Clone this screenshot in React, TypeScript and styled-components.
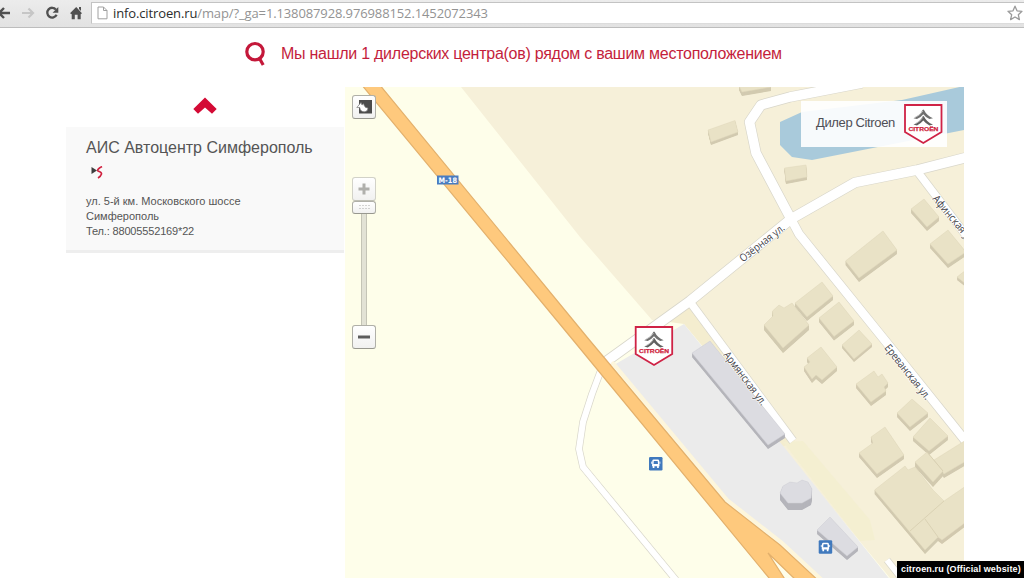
import React from "react";
import styled, { createGlobalStyle } from "styled-components";

const GlobalStyle = createGlobalStyle`
  * { box-sizing: border-box; }
  html, body { margin: 0; padding: 0; background: #fff; overflow: hidden; }
  body { font-family: "Liberation Sans", Arial, sans-serif; }
  svg { display: block; flex: none; }
`;

const Page = styled.div`
  position: relative;
  width: 1024px;
  height: 578px;
  overflow: hidden;
  background: #fff;
`;

const Toolbar = styled.div`
  display: flex;
  height: 28px;
  background: linear-gradient(#ececec, #e2e2e2);
  border-bottom: 1px solid #bdbdbd;
`;

const NavButtons = styled.div`
  width: 91px;
  height: 27px;
`;

const AddressField = styled.div`
  flex: 1;
  display: flex;
  align-items: center;
  height: 22px;
  margin-top: 2px;
  padding: 0 1px 0 5px;
  background: #fff;
  border: 1px solid #c3c3c3;
  border-right: none;
  border-bottom-color: #dcdcdc;
`;

const Url = styled.div`
  flex: 1;
  margin-left: 5px;
  font: 13px/20px "Open Sans", "Noto Sans", sans-serif;
  letter-spacing: -0.12px;
  color: #939393;
  white-space: nowrap;
`;

const Host = styled.span`
  color: #2c2c2c;
`;

const SearchResult = styled.header`
  display: flex;
  align-items: center;
  height: 59px;
  padding: 0 0 7px 245px;
`;

const Title = styled.h1`
  margin: 0 0 0 14px;
  font-size: 16px;
  font-weight: 400;
  line-height: 20px;
  letter-spacing: -0.26px;
  color: #c41e3c;
  white-space: nowrap;
`;

const Content = styled.main`
  display: flex;
  height: 491px;
`;

const Sidebar = styled.aside`
  display: flex;
  flex-direction: column;
  width: 345px;
  padding: 10px 1px 0 66px;
`;

const ScrollUp = styled.div`
  display: flex;
  justify-content: center;
  height: 30px;
`;

const DealerCard = styled.section`
  height: 126px;
  padding: 11px 20px 0;
  background: #f9f9f9;
  border-bottom: 3px solid #eeeeee;
`;

const DealerName = styled.h2`
  margin: 0 0 8px;
  font-size: 16px;
  font-weight: 400;
  line-height: 20px;
  color: #555;
  white-space: nowrap;
`;

const Address = styled.p`
  margin: 15px 0 0;
  font-size: 11px;
  line-height: 15px;
  color: #555;
  white-space: nowrap;
`;

const Phone = styled.span`
  letter-spacing: -0.16px;
`;

const MapFrame = styled.div`
  position: relative;
  width: 619px;
  height: 491px;
  overflow: hidden;
`;

const ViewToggle = styled.div`
  position: absolute;
  left: 7px;
  top: 8px;
`;

const ZoomControl = styled.div`
  position: absolute;
  left: 7px;
  top: 90px;
  display: flex;
  flex-direction: column;
  align-items: center;
`;

const MapButton = styled.div<{ $h?: number; $faded?: boolean }>`
  display: flex;
  align-items: center;
  justify-content: center;
  width: 24px;
  height: ${(p) => p.$h ?? 24}px;
  background: linear-gradient(#fff, #f1f1f0);
  border: 1px solid ${(p) => (p.$faded ? "#d2d2c8" : "#b0b0a8")};
  border-bottom-color: ${(p) => (p.$faded ? "#c0c0b6" : "#98988f")};
  border-radius: 3px;
`;

const Track = styled.div`
  width: 6px;
  height: 111px;
  background: #e2e2d5;
  border: solid #c4c4b6;
  border-width: 0 1px;
`;

const Legend = styled.div`
  position: absolute;
  left: 456px;
  top: 14px;
  display: flex;
  justify-content: space-between;
  width: 146px;
  height: 46px;
  padding: 3px 4px 0 15px;
  background: rgba(255, 255, 255, 0.9);
`;

const LegendLabel = styled.span`
  padding-top: 11px;
  font-size: 13px;
  line-height: 16px;
  letter-spacing: -0.36px;
  color: #4e4e56;
  white-space: nowrap;
`;

const Caption = styled.div`
  position: absolute;
  right: 0;
  bottom: 0;
  width: 127px;
  height: 17px;
  padding-left: 4px;
  background: #000;
  color: #fff;
  font-size: 9px;
  font-weight: 700;
  line-height: 17px;
  letter-spacing: 0.13px;
  white-space: nowrap;
`;

const BrandBadge = () => (
  <>
    <path d="M1 1H37.5V28L19.3 39L1 28Z" fill="#fff" stroke="#cf2346" strokeWidth="1.8" />
    <path d="M9.5 14.2Q16 11.5 18.6 6Q19.3 5.2 20 6Q22.6 11.5 29 14.2L25.5 15Q21.5 13.2 19.3 10.2Q17 13.2 13 15Z" fill="#707070" />
    <path d="M9.5 20.6Q16 17.9 18.6 12.4Q19.3 11.6 20 12.4Q22.6 17.9 29 20.6L25.5 21.4Q21.5 19.6 19.3 16.6Q17 19.6 13 21.4Z" fill="#606060" />
    <path d="M11 13.4Q16.5 11.2 18.8 7M11 19.8Q16.5 17.6 18.8 13.4" stroke="#c4c4c4" strokeWidth="0.9" fill="none" />
    <text
      x="4.4"
      y="26.5"
      fontSize="5.6"
      fontWeight="700"
      fill="#cf1f40"
      stroke="#cf1f40"
      strokeWidth="0.25"
      textLength="30"
      lengthAdjust="spacingAndGlyphs"
    >
      CITROËN
    </text>
  </>
);

type Pt = [number, number];
const toPoints = (pts: Pt[]) => pts.map((p) => p.join(",")).join(" ");

const Building = ({ pts, h, grey }: { pts: Pt[]; h: number; grey?: boolean }) => (
  <g>
    {Array.from({ length: h * 2 }, (_, i) => (
      <polygon
        key={i}
        points={toPoints(pts)}
        transform={`translate(0 ${h - i / 2})`}
        fill={grey ? "#b5b5bb" : "#d2cab0"}
      />
    ))}
    <polygon points={toPoints(pts)} fill={grey ? "#dcdce1" : "#e9e2c6"} stroke={grey ? "#d0d0d6" : "#e0d8bc"} strokeWidth="0.5" />
  </g>
);

const houses: { h: number; pts: Pt[] }[] = [
  { h: 3, pts: [[708, 130], [735, 120.5], [738, 132], [711, 142]] },
  { h: 4, pts: [[739, 86], [771, 86], [771, 87], [742, 92]] },
  { h: 3, pts: [[784.5, 168], [806, 165], [807, 177], [786, 181]] },
  { h: 4, pts: [[845.5, 261], [883, 231], [897, 250], [859, 278]] },
  { h: 4, pts: [[911, 209], [924, 199], [939, 217], [927, 227]] },
  { h: 4, pts: [[930, 244], [948, 230], [966, 252], [948, 264]] },
  { h: 3, pts: [[957, 277], [966, 270], [966, 284]] },
  { h: 4, pts: [[795, 303], [822, 282], [833, 296], [807, 317]] },
  { h: 5, pts: [[764, 325], [773, 316], [772.5, 311], [779, 305], [784, 308], [792, 303], [809, 325], [783, 348]] },
  { h: 4, pts: [[819, 318], [839, 302], [854, 321], [834, 336.5]] },
  { h: 3, pts: [[842, 345], [859, 330], [872, 344], [854, 359]] },
  { h: 4, pts: [[804, 367], [810, 362], [807, 358], [821, 347], [837, 367], [822, 380], [816, 375], [812, 379]] },
  { h: 4, pts: [[856, 384], [874, 371], [878, 377], [882, 374], [888, 383], [884, 387], [886, 391], [871, 402]] },
  { h: 4, pts: [[897, 413], [912, 399], [928, 413], [910, 427]] },
  { h: 4, pts: [[913, 437], [930, 418], [948, 436], [929, 451]] },
  { h: 4, pts: [[859, 453], [873, 443], [871, 437], [885, 427], [904, 455], [877, 474]] },
  { h: 4, pts: [[934, 460], [966, 440], [966, 461], [944, 474]] },
  { h: 5, pts: [[915, 462], [927, 452], [943, 471], [933, 482]] },
  { h: 4, pts: [[874.5, 490], [905, 466], [908, 470], [915, 467], [933, 490], [944, 501], [966, 486], [966, 522], [942, 540], [938, 537], [925, 550]] },
];

const greyBuildings: { h: number; pts: Pt[] }[] = [
  { h: 4, pts: [[692, 353], [710, 341], [785, 434], [768, 445]] },
  { h: 7, pts: [[780, 493], [783, 486], [790, 482], [797, 483], [802, 480], [808, 482], [812, 489], [811, 498], [802, 503], [788, 503]] },
  { h: 4, pts: [[817, 530], [830, 517], [858, 547], [847, 556]] },
];

const streets = [
  { d: "M604 363L690 301L791 219L855 182.5L917 170L968 157", w: 9.5 },
  { d: "M791 219L756 153L749.5 122L761 105L790 97L862 83", w: 9.5 },
  { d: "M791 219L799 234L887 343L968 444", w: 8.5 },
  { d: "M917 171L968 238", w: 7.5 },
  { d: "M690 302L793 441", w: 7.5 },
  { d: "M887 560L906 584", w: 6 },
  { d: "M601 370L592 394L583 422L579 449L583 467L676 580", w: 6 },
];

const BusStop = ({ x, y }: { x: number; y: number }) => (
  <g transform={`translate(${x} ${y})`}>
    <rect width="13.5" height="13.5" rx="1.2" fill="#4079bd" />
    <path
      fillRule="evenodd"
      d="M4.6 2.5H8.9Q10 2.5 10.2 3.7L10.5 9.3H9.8V11H8.1V9.3H5.4V11H3.7V9.3H3L3.3 3.7Q3.5 2.5 4.6 2.5ZM4.8 4L4.5 7H9L8.7 4Z"
      fill="#fff"
    />
    <path d="M2.6 4.6V6.8M10.9 4.6V6.8" stroke="#fff" strokeWidth="0.8" />
  </g>
);

const StreetName = ({ x, y, angle, length, children }: { x: number; y: number; angle: number; length: number; children: string }) => (
  <text
    transform={`translate(${x} ${y}) rotate(${angle})`}
    textLength={length}
    lengthAdjust="spacingAndGlyphs"
    fontFamily="'Open Sans', sans-serif"
    fontSize="10.8"
    fill="#45454a"
    stroke="#fff"
    strokeWidth="1.6"
    strokeOpacity="0.7"
    paintOrder="stroke"
  >
    {children}
  </text>
);

const StreetMap = () => (
  <svg width="619" height="491" viewBox="345 87 619 491">
    <rect x="345" y="87" width="619" height="491" fill="#fefeea" />
    <path d="M461 87L580 237L652 320L684 322L782 447L890 578H964V87Z" fill="#f6f0d9" />
    <path d="M662 321L690 303L795 441L782 447L704 348L684 324Z" fill="#f4edcf" />
    <path d="M783 442L803 441L870 520L875 540L860 541Z" fill="#f4efd1" />
    <path d="M780 122L802 112L902 100L964 86V130L812 160L792 157L780 145Z" fill="#a9cadb" />
    <path d="M614 365L684 324L784 447L892 582H822L780 543L727 499Z" fill="#ebebeb" />
    {streets.map((s) => (
      <path key={s.d} d={s.d} fill="none" stroke="#d8d6ca" strokeWidth={s.w + 1.4} strokeLinejoin="round" />
    ))}
    {streets.map((s) => (
      <path key={s.d} d={s.d} fill="none" stroke="#fff" strokeWidth={s.w} strokeLinejoin="round" />
    ))}
    <path d="M612 362L727 500L782 543L824 582" fill="none" stroke="#fdf6dc" strokeWidth="4" />
    <path
      d="M361 84L379 84L589 339.5L725 502L780 545L822 584H800L768 553L788 584H774L573 340Z"
      fill="#fec97d"
      stroke="#e3b06c"
      strokeWidth="1.2"
    />
    {greyBuildings.map((b, i) => (
      <Building key={i} {...b} grey />
    ))}
    {houses.map((b, i) => (
      <Building key={i} {...b} />
    ))}
    <path d="M944 501L910 531M925 519L938 537M927 452L943 471" stroke="#d6cdaf" strokeWidth="0.8" fill="none" />
    <g>
      <rect x="437" y="175.5" width="21.5" height="9" fill="#4a7cc0" />
      <text x="438.5" y="182.8" fontSize="7.5" fontWeight="700" fontFamily="'DejaVu Sans', sans-serif" fill="#fff" textLength="18.5" lengthAdjust="spacingAndGlyphs">
        М-18
      </text>
    </g>
    <StreetName x={743} y={262.5} angle={-38} length={54}>Озёрная ул.</StreetName>
    <StreetName x={723} y={355} angle={53} length={64}>Армянская ул.</StreetName>
    <StreetName x={884} y={348} angle={51.5} length={67}>Ереванская ул.</StreetName>
    <StreetName x={932} y={199} angle={50} length={61}>Афинская ул.</StreetName>
    <BusStop x={649} y={457} />
    <BusStop x={818.7} y={540.3} />
    <g transform="translate(634.7 326)">
      <BrandBadge />
    </g>
  </svg>
);

export default function App() {
  return (
    <Page>
      <GlobalStyle />
      <Toolbar>
        <NavButtons>
          <svg width="91" height="27" fill="none" strokeWidth="2.4">
            <path d="M-3 13H10M4 8L-1 13L4 18" stroke="#505050" />
            <path d="M22 13H33M28.5 8.5L33 13L28.5 17.5" stroke="#c6c6c6" strokeWidth="2.2" />
            <path d="M56 9.6A4.9 4.9 0 1 0 56.6 14.8" stroke="#505050" strokeWidth="2.3" />
            <path d="M58.3 7V12.7H52.6Z" fill="#505050" />
            <path d="M70 13.2L76.2 7L82 13.2L80.7 14.2V19.3H77.6V14.8H74.8V19.3H71.7V14.2ZM79 7H81V11L79 9Z" fill="#505050" />
          </svg>
        </NavButtons>
        <AddressField>
          <svg width="11" height="14" fill="#fff" stroke="#a0a0a0">
            <path d="M1 1H6.5L10 4.5V12.8H1ZM6.5 1V4.5H10" />
          </svg>
          <Url>
            <Host>info.citroen.ru</Host>/map/?_ga=1.138087928.976988152.1452072343
          </Url>
          <svg width="16" height="16" fill="none" stroke="#9a9a9a" strokeWidth="1.3">
            <path d="M8 1.2L10 5.8L15 6.3L11.3 9.7L12.4 14.6L8 12L3.6 14.6L4.7 9.7L1 6.3L6 5.8Z" strokeLinejoin="round" />
          </svg>
        </AddressField>
      </Toolbar>
      <SearchResult>
        <svg width="22" height="26" fill="none" stroke="#c4183a">
          <circle cx="10" cy="10.7" r="8.2" strokeWidth="3.2" />
          <path d="M14 16.5L18.2 24" strokeWidth="3.2" />
        </svg>
        <Title>Мы нашли 1 дилерских центра(ов) рядом с вашим местоположением</Title>
      </SearchResult>
      <Content>
        <Sidebar>
          <ScrollUp>
            <svg width="24" height="18" fill="#d40a35">
              <path d="M12 0.6L23.7 12L19 16.7L12 10.6L5 16.7L0.3 12Z" />
            </svg>
          </ScrollUp>
          <DealerCard>
            <DealerName>АИС Автоцентр Симферополь</DealerName>
            <svg width="20" height="13">
              <path d="M5.5 1L11 4.5L5.5 8Z" fill="#3e3e3e" />
              <path d="M16 0.5Q10.5 3.5 12 5Q16 6.5 15.5 8Q15 10 12 12" fill="none" stroke="#d0213f" strokeWidth="1.6" />
            </svg>
            <Address>
              ул. 5-й км. Московского шоссе
              <br />
              Симферополь
              <br />
              <Phone>Тел.: 88005552169*22</Phone>
            </Address>
          </DealerCard>
        </Sidebar>
        <MapFrame>
          <StreetMap />
          <ViewToggle>
            <MapButton>
              <svg width="17" height="14">
                <rect x="3" width="13" height="13.5" fill="#4c4c4c" />
                <path d="M0.8 7.5L5 2.5L6 5Q8 2.5 8.2 5.5Q9 8 12 8Q12 11 9 11.8Q4.5 12.3 3.7 7.5Z" fill="#fff" stroke="#777" strokeWidth="0.7" />
              </svg>
            </MapButton>
          </ViewToggle>
          <ZoomControl>
            <MapButton $faded>
              <svg width="12" height="12">
                <path d="M6 0.5V11.5M0.5 6H11.5" stroke="#b0b0ac" strokeWidth="3" />
              </svg>
            </MapButton>
            <MapButton $h={13}>
              <svg width="11" height="5">
                <path d="M0.5 0.5H11M0.5 3.5H11" stroke="#aaa" strokeWidth="1" strokeDasharray="1 2" />
              </svg>
            </MapButton>
            <Track />
            <MapButton>
              <svg width="12" height="4">
                <path d="M0 2H12" stroke="#5c5c5c" strokeWidth="3" />
              </svg>
            </MapButton>
          </ZoomControl>
          <Legend>
            <LegendLabel>Дилер Citroen</LegendLabel>
            <svg width="39" height="41">
              <BrandBadge />
            </svg>
          </Legend>
        </MapFrame>
      </Content>
      <Caption>citroen.ru (Official website)</Caption>
    </Page>
  );
}
